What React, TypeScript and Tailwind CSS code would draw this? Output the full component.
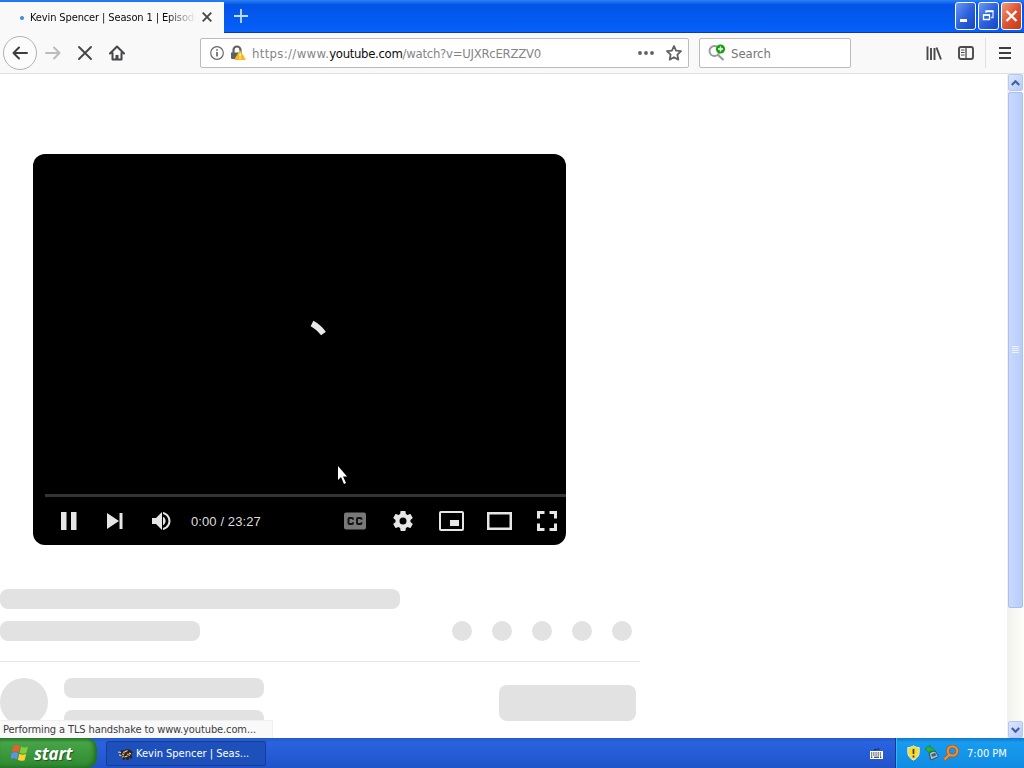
import type { ReactNode } from 'react';

const ui = "font-['DejaVu_Sans_Condensed','DejaVu_Sans',sans-serif]";

const dots = [1, 2, 3, 4, 5];

function WindowButton({ children, close = false }: { children: ReactNode; close?: boolean }) {
  return (
    <div
      className={
        close
          ? 'h-[28px] w-[21px] shrink-0 rounded-[3px] border border-white bg-linear-to-br from-[#f0997c] via-[#dd5433] to-[#c23a14]'
          : 'h-[28px] w-[21px] shrink-0 rounded-[3px] border border-white bg-linear-to-br from-[#6d97f3] via-[#2b62de] to-[#1846c2]'
      }
    >
      <svg width="19" height="26" viewBox="0 0 19 26" fill="none">
        {children}
      </svg>
    </div>
  );
}

function TitleBar() {
  return (
    <div className="flex h-[33px] border-b border-[#0a3ba8] bg-linear-to-b from-[#2b80f5] from-0% via-[#0354e6] via-15% to-[#0560fb]">
      <div className="mt-[2px] flex h-[31px] w-[224px] shrink-0 items-center bg-[#f9f9fa]">
        <div className="ml-[20px] size-[4px] shrink-0 rounded-full bg-[#3d8bd8]" />
        <div className="ml-[6px] w-[166px] overflow-hidden mask-r-from-82% mask-r-to-100%">
          <span className="block text-[11px] leading-[16px] tracking-[-0.12px] whitespace-nowrap text-[#0c0c0d]">
            Kevin Spencer | Season 1 | Episode
          </span>
        </div>
        <svg className="mb-[2px] ml-[6px]" width="10" height="10" viewBox="0 0 10 10" stroke="#454545" strokeWidth="1.8">
          <path d="M.7.7l8.6 8.6M9.3.7L.7 9.3" />
        </svg>
      </div>
      <svg className="mt-[9px] ml-[10px]" width="14" height="14" viewBox="0 0 14 14" stroke="#c4dcff" strokeWidth="1.8">
        <path d="M7 0v14M0 7h14" />
      </svg>
      <div className="mt-[2px] ml-auto flex gap-[2px] pr-[2px]">
        <WindowButton>
          <path d="M4 17.500h7" stroke="#fff" strokeWidth="3" />
        </WindowButton>
        <WindowButton>
          <path d="M7 10V8.500h7v6h-2" stroke="#d4e2ff" strokeWidth="1.300" />
          <path d="M4.500 12.200h6v4.300h-6z" stroke="#fff" strokeWidth="1.300" />
          <path d="M4 12h7M6.500 8.200h8" stroke="#fff" strokeWidth="1.700" />
        </WindowButton>
        <WindowButton close>
          <path d="M4.500 8l10 10M14.500 8l-10 10" stroke="#fff" strokeWidth="2.300" />
        </WindowButton>
      </div>
    </div>
  );
}

function ToolBar() {
  return (
    <div className="flex h-[41px] items-center border-b border-[#e0e0e1] bg-[#f9f9fa]">
      <div className="ml-[3px] flex size-[34px] shrink-0 items-center justify-center rounded-full border border-[#b1b1b3] bg-[#fcfcfc]">
        <svg width="16" height="16" viewBox="0 0 16 16" fill="none" stroke="#3d3d3f" strokeWidth="2" strokeLinecap="round" strokeLinejoin="round">
          <path d="M15 8H1.500M7 2.500L1.500 8 7 13.500" />
        </svg>
      </div>
      <svg className="ml-[8px]" width="16" height="16" viewBox="0 0 16 16" fill="none" stroke="#bcbcbd" strokeWidth="2" strokeLinecap="round" strokeLinejoin="round">
        <path d="M1 8h13.500M9 2.500L14.500 8 9 13.500" />
      </svg>
      <svg className="ml-[16px]" width="16" height="16" viewBox="0 0 16 16" fill="none" stroke="#454547" strokeWidth="1.900" strokeLinecap="round">
        <path d="M2 2l12 12M14 2L2 14" />
      </svg>
      <svg className="ml-[16px]" width="16" height="16" viewBox="0 0 16 16" fill="none" stroke="#454547" strokeWidth="2" strokeLinecap="round" strokeLinejoin="round">
        <path d="M1 8.500l7-7 7 7M3.500 8v6.500h9V8" />
        <path d="M8 14v-4" strokeWidth="3" strokeLinecap="butt" />
      </svg>

      <div className="ml-[75px] flex h-[30px] w-[489px] shrink-0 items-center rounded-[2px] border border-[#bcbcc0] bg-white">
        <svg className="ml-[9px] shrink-0" width="14" height="14" viewBox="0 0 14 14" fill="none" stroke="#68686a">
          <circle cx="7" cy="7" r="6.300" strokeWidth="1.200" />
          <path d="M7 6v4.500M7 3.200v1.600" strokeWidth="1.700" />
        </svg>
        <svg className="ml-[7px] shrink-0" width="15" height="16" viewBox="0 0 15 16" fill="none">
          <path d="M2.500 8V5a3.500 3.500 0 017 0v3" stroke="#606062" strokeWidth="2.200" />
          <path d="M0 7.500h11V14H1a1 1 0 01-1-1z" fill="#606062" />
          <path d="M9 5.800L14.300 14.500H3.800z" fill="#f6b91e" stroke="#f6b91e" strokeLinejoin="round" />
          <path d="M9.100 8.200v3.400M9.100 12.500v1.300" stroke="#fff" strokeWidth="1.300" />
        </svg>
        <span className="mt-[2px] ml-[6px] text-[13px] whitespace-nowrap text-[#858587]">
          <span className="tracking-[0.34px]">https://www.</span>
          <span className="tracking-[-0.32px] text-[#0c0c0d]">youtube.com</span>
          <span className="tracking-[-0.26px]">/watch?v=UJXRcERZZV0</span>
        </span>
        <svg className="ml-auto shrink-0" width="16" height="16" viewBox="0 0 16 16" fill="#606062">
          <circle cx="2" cy="8" r="1.900" />
          <circle cx="8" cy="8" r="1.900" />
          <circle cx="14" cy="8" r="1.900" />
        </svg>
        <svg className="mr-[6px] ml-[12px] shrink-0" width="16" height="16" viewBox="0 0 16 16" fill="none" stroke="#606062" strokeWidth="1.800" strokeLinejoin="round">
          <path d="M8 1l2.100 4.600 4.900.6-3.600 3.400.9 5L8 12.200l-4.300 2.400.9-5L1 6.200l4.900-.6z" />
        </svg>
      </div>

      <div className="ml-[10px] flex h-[30px] w-[152px] shrink-0 items-center rounded-[2px] border border-[#bcbcc0] bg-white">
        <svg className="ml-[8px] shrink-0" width="18" height="18" viewBox="0 0 18 18" fill="none">
          <circle cx="6.500" cy="7" r="5" stroke="#99999b" strokeWidth="1.900" />
          <path d="M10 11l5.500 5" stroke="#99999b" strokeWidth="2.200" />
          <circle cx="12.500" cy="5" r="4.600" fill="#12a30b" />
          <path d="M12.500 2.500v5M10 5h5" stroke="#fff" strokeWidth="1.400" />
        </svg>
        <span className="mt-[2px] ml-[5px] text-[13px] tracking-[-0.05px] text-[#757577]">Search</span>
      </div>

      <svg className="ml-auto shrink-0" width="16" height="16" viewBox="0 0 16 16" fill="none" stroke="#4a4a4c" strokeWidth="1.900">
        <path d="M1.500 1.500V15M5 3V15M8.500 3V15M10.500 2.500l4.500 12" />
      </svg>
      <svg className="ml-[16px] shrink-0" width="16" height="16" viewBox="0 0 16 16" fill="none" stroke="#4a4a4c">
        <rect x="1" y="2" width="14" height="12" rx="2" strokeWidth="1.900" />
        <path d="M8 2v12" strokeWidth="1.300" />
        <path d="M3 5h3.500M3 7.500h3.500M3 10h3.500" />
      </svg>
      <div className="ml-[11px] h-[30px] w-px shrink-0 bg-[#e0e0e1]" />
      <svg className="mr-[11px] ml-[11px] shrink-0" width="16" height="16" viewBox="0 0 16 16" stroke="#3d3d3f" strokeWidth="1.800">
        <path d="M2 3h12M2 8h12M2 13h12" />
      </svg>
    </div>
  );
}

function PlayerControls() {
  return (
    <div className="flex h-[48px] items-center text-[#e6e6e6]">
      <svg className="ml-[28px]" width="16" height="20" viewBox="0 0 16 20" fill="currentColor">
        <path d="M0 1h5.500v18H0zM10 1h5.500v18H10z" />
      </svg>
      <svg className="ml-[29px]" width="17" height="16" viewBox="0 0 17 16" fill="currentColor">
        <path d="M1 0l12 8-12 8zM13.500 0h3v16h-3z" />
      </svg>
      <svg className="ml-[29px]" width="19" height="18" viewBox="0 0 19 18" fill="currentColor">
        <path d="M0 6h4l6-6v18l-6-6H0zM11 4.800c1.600.8 2.600 2.400 2.600 4.200S12.600 12.400 11 13.200zM11 0c4.400.9 7.500 4.600 7.500 9s-3.100 8.100-7.500 9v-2.100c3.200-.9 5.400-3.600 5.400-6.900S14.200 3 11 2.100z" />
      </svg>
      <span className="mt-px ml-[20px] font-['Liberation_Sans',Arial,sans-serif] text-[13px] tracking-[0.1px] whitespace-nowrap text-[#dddddd]">
        0:00 / 23:27
      </span>
      <svg className="mr-[27px] ml-auto" width="22" height="18" viewBox="0 0 22 18">
        <rect y=".5" width="22" height="17" rx="2" fill="#787878" />
        <path
          d="M9 7.700V7a1 1 0 00-1-1H5.500a1 1 0 00-1 1v4a1 1 0 001 1H8a1 1 0 001-1v-.7M17.500 7.700V7a1 1 0 00-1-1H14a1 1 0 00-1 1v4a1 1 0 001 1h2.500a1 1 0 001-1v-.7"
          fill="none"
          stroke="#111"
          strokeWidth="1.900"
        />
      </svg>
      <svg className="mr-[26px]" width="20" height="20" viewBox="2 2 20 20" fill="currentColor">
        <path d="M19.430 12.980c.04-.32.07-.64.07-.98s-.03-.66-.07-.98l2.110-1.650c.19-.15.24-.42.12-.64l-2-3.460c-.12-.22-.39-.3-.61-.22l-2.490 1c-.52-.4-1.080-.73-1.690-.98l-.38-2.650C14.460 2.180 14.250 2 14 2h-4c-.25 0-.46.18-.49.42l-.38 2.650c-.61.25-1.170.59-1.690.98l-2.490-1c-.23-.09-.49 0-.61.22l-2 3.460c-.13.22-.07.49.12.64l2.110 1.650c-.04.32-.07.65-.07.98s.03.66.07.98l-2.110 1.650c-.19.15-.24.42-.12.64l2 3.460c.12.22.39.3.61.22l2.490-1c.52.4 1.080.73 1.690.98l.38 2.650c.03.24.24.42.49.42h4c.25 0 .46-.18.49-.42l.38-2.650c.61-.25 1.170-.59 1.690-.98l2.490 1c.23.09.49 0 .61-.22l2-3.460c.12-.22.07-.49-.12-.64zM12 15.500a3.500 3.500 0 110-7 3.500 3.500 0 010 7z" />
      </svg>
      <svg className="mr-[23px]" width="25" height="20" viewBox="0 0 25 20" fill="none" stroke="currentColor" strokeWidth="2">
        <rect x="1" y="1" width="23" height="18" rx="1" />
        <path d="M11 9h9v6h-9z" fill="currentColor" stroke="none" />
      </svg>
      <svg className="mr-[25px]" width="25" height="18" viewBox="0 0 25 18" fill="none" stroke="currentColor" strokeWidth="2.500">
        <path d="M1.250 1.250h22.500v15.500H1.250z" />
      </svg>
      <svg className="mr-[9px]" width="20" height="20" viewBox="0 0 20 20" fill="none" stroke="currentColor" strokeWidth="3">
        <path d="M1.500 7.500v-6h6M12.500 1.500h6v6M18.500 12.500v6h-6M7.500 18.500h-6v-6" />
      </svg>
    </div>
  );
}

function Player() {
  return (
    <div className="relative mt-[80px] ml-[33px] flex h-[391px] w-[533px] shrink-0 flex-col overflow-hidden rounded-[12px] bg-black">
      <div className="flex-1 pt-[166px] pl-[276px]">
        <svg width="20" height="20" viewBox="0 0 20 20" fill="none">
          <path d="M3 3.500c4.300 2.200 8 5.500 11.500 10" stroke="#e8e8e8" strokeWidth="6" />
        </svg>
      </div>
      <div className="ml-[12px] h-[3px] bg-[#343434]" />
      <PlayerControls />
      <svg className="absolute top-[311px] left-[304px]" width="12" height="20" viewBox="0 0 12 20">
        <path d="M1 1v14l3-3 3 7 2-1-3-6.500h4z" fill="#fff" />
      </svg>
    </div>
  );
}

function Skeleton() {
  return (
    <div className="flex w-[640px] shrink-0 flex-col">
      <div className="mt-[44px] h-[20px] w-[400px] rounded-[8px] bg-[#e2e2e2]" />
      <div className="mt-[12px] flex h-[20px] items-center">
        <div className="h-[20px] w-[200px] rounded-[8px] bg-[#e2e2e2]" />
        <div className="ml-auto flex gap-[20px] pr-[8px]">
          {dots.map((dot) => (
            <div key={dot} className="size-[20px] rounded-full bg-[#e2e2e2]" />
          ))}
        </div>
      </div>
      <div className="mt-[20px] h-px bg-[#e5e5e5]" />
      <div className="mt-[16px] flex">
        <div className="size-[48px] rounded-full bg-[#e2e2e2]" />
        <div className="ml-[16px] flex flex-col gap-[12px]">
          <div className="h-[20px] w-[200px] rounded-[8px] bg-[#e2e2e2]" />
          <div className="h-[20px] w-[200px] rounded-[8px] bg-[#e2e2e2]" />
        </div>
        <div className="mt-[7px] mr-[4px] ml-auto h-[36px] w-[137px] rounded-[8px] bg-[#e2e2e2]" />
      </div>
    </div>
  );
}

function ScrollButton({ d }: { d: string }) {
  return (
    <div className="flex h-[17px] w-[15px] shrink-0 items-center justify-center rounded-[2px] border border-[#b4c8f2] bg-linear-to-br from-[#dce6ff] to-[#b7cbf9]">
      <svg width="9" height="6" viewBox="0 0 9 6" fill="none" stroke="#44609a" strokeWidth="2.200">
        <path d={d} />
      </svg>
    </div>
  );
}

function ScrollBar() {
  return (
    <div className="flex w-[17px] shrink-0 flex-col items-center bg-linear-to-r from-[#f1f1ec] to-[#fdfdfa]">
      <ScrollButton d="M.8 5l3.700-3.700L8.200 5" />
      <div className="mt-px flex h-[516px] w-[15px] flex-col items-center justify-center gap-px rounded-[2px] border border-[#a9bfef] bg-linear-to-r from-[#c9d8fd] to-[#b9cdfb] pb-[2px]">
        <div className="h-px w-[7px] bg-[#eef4fe]" />
        <div className="h-px w-[7px] bg-[#eef4fe]" />
        <div className="h-px w-[7px] bg-[#eef4fe]" />
        <div className="h-px w-[7px] bg-[#eef4fe]" />
      </div>
      <div className="mt-auto">
        <ScrollButton d="M.8 1l3.700 3.700L8.200 1" />
      </div>
    </div>
  );
}

function TaskBar() {
  return (
    <div className="flex h-[30px] shrink-0 bg-linear-to-b from-[#2458c8] from-0% via-[#2a63df] via-15% to-[#2053c9]">
      <div className="flex w-[97px] shrink-0 items-center rounded-r-[10px] bg-linear-to-b from-[#2c7a2c] from-0% via-[#46a346] via-15% to-[#2f8a30] shadow-[inset_-3px_-1px_4px_#206d22]">
        <svg className="ml-[11px]" width="18" height="18" viewBox="0 0 18 18">
          <path d="M2.500 2C5 .6 7 .8 9 2L7.500 8.300C5.500 7 3.500 7 1 8z" fill="#ef5b2b" />
          <path d="M10 2.600c2.300 1.200 4.300 1.200 7 .2L15.400 9c-2.500 1-4.600.8-6.800-.3z" fill="#85ca3f" />
          <path d="M.8 9c2.400-1.100 4.500-1 6.500.2l-1.500 6C3.800 14 1.800 14-.8 15z" fill="#5b92f0" />
          <path d="M8.300 9.800c2.300 1.200 4.300 1.200 6.900.2l-1.600 6.200c-2.500 1-4.600.8-6.800-.4z" fill="#fbd134" />
        </svg>
        <span className="ml-[5px] font-['Open_Sans','Liberation_Sans',sans-serif] text-[17px] leading-none font-bold tracking-[-0.2px] text-white italic [text-shadow:1px_1px_1px_#1c551d]">
          start
        </span>
      </div>
      <div className="mt-[3px] ml-[9px] flex h-[25px] w-[160px] shrink-0 items-center rounded-[2px] border border-[#173d96] bg-[#1e50bb]">
        <svg className="ml-[11px] shrink-0" width="15" height="14" viewBox="0 0 15 14">
          <path d="M3 3l3 .5L9 2l3 .5L14.500 5l-1 3 1 3.500h-2l-1-1.500-1 3H8.500L8 11l-2 2H4.500L5 10.500 2.500 9z" fill="#2a2320" />
          <path d="M0 5l3 .5M1 8l2.500.5M6.500 5l3-1.500M4 7l2 .5M11 6l2 1M6.500 10l3-1" stroke="#e8d9bd" strokeWidth="1.200" />
          <path d="M5 5l2 1M9 7l3 1.500M4 10l2-1" stroke="#cf8b3c" strokeWidth="1.400" />
        </svg>
        <span className="mt-[2px] ml-[3px] text-[11px] whitespace-nowrap text-white">Kevin Spencer | Seas...</span>
      </div>
      <svg className="mt-[9px] ml-auto shrink-0" width="13" height="13" viewBox="0 0 13 13" fill="none">
        <path d="M4 3.500l1-1.500 1.500 1L8 1.500l1.500 1" stroke="#10244f" />
        <path d="M0 4h13v8H0z" fill="#fff" />
        <path d="M1 6h11M1 8h11M1 10.200h2M10 10.200h2" stroke="#111" strokeWidth="1.200" strokeDasharray="1.300 .9" />
        <path d="M4 10.200h5" stroke="#111" />
      </svg>
      <div className="ml-[12px] flex w-[129px] shrink-0 items-center border-l border-[#0d3792] bg-linear-to-b from-[#1277cf] from-0% via-[#179cee] via-15% to-[#118be3] shadow-[inset_1px_0_0_#32b9f7]">
        <svg className="ml-[11px]" width="13" height="16" viewBox="0 0 13 16">
          <path d="M6.500.8C5 2 3 2.500.8 2.500v5c0 3.500 2.500 5.800 5.700 7.700 3.200-1.900 5.700-4.200 5.700-7.700v-5C10 2.500 8 2 6.500.8z" fill="#f5dc35" stroke="#e9e9dc" />
          <path d="M6.500 4v5M6.500 10.500v2" stroke="#453b10" strokeWidth="1.700" />
        </svg>
        <svg className="ml-[5px]" width="14" height="16" viewBox="0 0 14 16">
          <path d="M4 8l6-2.500 3.500 6L6 15z" fill="#b5c2c5" stroke="#38505b" />
          <path d="M6 9.500l4-1.700 1.500 2.500-4 1.700z" fill="#356493" />
          <path d="M0 4l5-4v2.500c3 0 4.500 1.500 5 4.500-2-1.500-3-1.500-5-1v2.500z" fill="#29b43a" stroke="#127a27" strokeWidth=".6" />
        </svg>
        <svg className="ml-[4px]" width="16" height="16" viewBox="0 0 16 16" fill="none">
          <path d="M6.500 9.500L1.200 14.800" stroke="#b85c17" strokeWidth="3.600" />
          <circle cx="9.500" cy="6" r="4.700" stroke="#b85c17" strokeWidth="3.400" />
          <circle cx="9.500" cy="6" r="4.700" stroke="#f5943a" strokeWidth="1.800" />
          <path d="M6.500 9.500L1.500 14.500" stroke="#f5943a" strokeWidth="1.800" />
        </svg>
        <span className="mt-[2px] ml-[8px] text-[11px] whitespace-nowrap text-white">7:00 PM</span>
      </div>
    </div>
  );
}

export default function App() {
  return (
    <div className={`flex h-[768px] w-[1024px] flex-col overflow-hidden bg-white ${ui}`}>
      <TitleBar />
      <ToolBar />
      <div className="relative flex min-h-0 flex-1 overflow-hidden">
        <main className="flex min-w-0 flex-1 flex-col overflow-hidden">
          <Player />
          <Skeleton />
        </main>
        <ScrollBar />
        <div className="absolute bottom-0 left-0 flex h-[18px] w-[273px] items-center border-t border-r border-[#f0f0f0] bg-[#f9f9fa] pt-[2px] pl-[3px] text-[11px] tracking-[-0.11px] whitespace-nowrap text-[#3c3c3d]">
          Performing a TLS handshake to www.youtube.com...
        </div>
      </div>
      <TaskBar />
    </div>
  );
}
